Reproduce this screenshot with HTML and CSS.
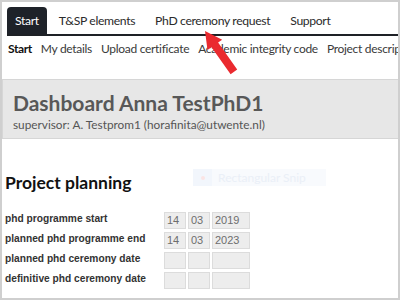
FILE: index.html
```html
<!DOCTYPE html>
<html>
<head>
<meta charset="utf-8">
<link rel="stylesheet" href="styles.css">
</head>
<body>
<div class="frame">
  <nav class="tabs">
    <span class="tab active">Start</span>
    <span class="tab first">T&amp;SP elements</span>
    <span class="tab">PhD ceremony request</span>
    <span class="tab">Support</span>
  </nav>
  <nav class="subnav">
    <span class="sub current">Start</span>
    <span class="sub">My details</span>
    <span class="sub">Upload certificate</span>
    <span class="sub">Academic integrity code</span>
    <span class="sub">Project description</span>
  </nav>
  <header class="dash">
    <h1 class="dash-title">Dashboard Anna TestPhD1</h1>
    <p class="dash-sub">supervisor: A. Testprom1 (horafinita@utwente.nl)</p>
  </header>
  <section class="planning">
    <h2 class="plan-title">Project planning</h2>
    <div class="plan-grid">
      <div class="label">phd programme start</div>
      <div class="dates"><span class="box d">14</span><span class="box d">03</span><span class="box y">2019</span></div>
      <div class="label">planned phd programme end</div>
      <div class="dates"><span class="box d">14</span><span class="box d">03</span><span class="box y">2023</span></div>
      <div class="label">planned phd ceremony date</div>
      <div class="dates"><span class="box d"></span><span class="box d"></span><span class="box y"></span></div>
      <div class="label">definitive phd ceremony date</div>
      <div class="dates"><span class="box d"></span><span class="box d"></span><span class="box y"></span></div>
    </div>
  </section>
  <div class="snip"><span class="snip-icon"><span class="snip-dot"></span></span><span class="snip-text">Rectangular Snip</span></div>
  <svg class="arrow" width="400" height="300" viewBox="0 0 400 300">
    <polygon fill="#ea2a2f" points="205,31 222.2,39.7 218.1,42.6 237.2,69.6 230.6,74.2 211.5,47.2 207.5,50.1"/>
  </svg>
</div>
</body>
</html>
```

FILE: styles.css
```css
html, body {
  margin: 0;
  padding: 0;
  background: #fff;
}
.frame {
  position: relative;
  width: 400px;
  height: 300px;
  box-sizing: border-box;
  border: 2px solid #cfcfcf;
  overflow: hidden;
  font-family: Lato, "Open Sans", sans-serif;
}
.tabs {
  display: flex;
  margin: 5px 0 0 5px;
  height: 27px;
  border-bottom: 2px solid #1e2126;
}
.tab {
  display: block;
  padding: 0 10px;
  line-height: 27px;
  font-size: 12.2px;
  letter-spacing: -0.35px;
  color: #2b2b2b;
  white-space: nowrap;
}
.tab.active {
  padding: 0 8px;
  background: #1e2229;
  color: #fff;
  border-radius: 4px 4px 0 0;
}
.tab.first {
  padding-left: 12px;
}
.subnav {
  display: flex;
  gap: 9px;
  padding: 4px 0 0 6px;
  height: 19px;
  white-space: nowrap;
  overflow: hidden;
}
.sub {
  font-size: 12px;
  letter-spacing: -0.3px;
  line-height: 18px;
  color: #3a3a3a;
}
.sub.current {
  color: #111;
  font-weight: 700;
  letter-spacing: -0.4px;
}
.dash {
  margin-top: 20px;
  height: 58px;
  background: #e7e7e7;
  border-top: 1px solid #d6d6d6;
  border-bottom: 1px solid #d6d6d6;
  border-left: 1px solid #d6d6d6;
  padding: 0 0 0 10px;
}
.dash-title {
  margin: 0;
  padding-top: 11px;
  font-size: 21px;
  line-height: 24px;
  font-weight: 700;
  color: #585858;
}
.dash-sub {
  margin: 2px 0 0;
  font-size: 11.8px;
  line-height: 15px;
  color: #555;
}
.planning {
  padding: 0 0 0 3px;
}
.plan-title {
  margin: 33px 0 0;
  font-size: 17.5px;
  line-height: 21px;
  font-weight: 700;
  color: #111;
}
.plan-grid {
  display: grid;
  grid-template-columns: 159px auto;
  row-gap: 3px;
  margin-top: 19px;
}
.label {
  font-family: "Liberation Sans", Arial, sans-serif;
  font-size: 10.2px;
  font-weight: 700;
  line-height: 13px;
  color: #333;
}
.dates {
  display: flex;
  gap: 2px;
}
.box {
  display: block;
  box-sizing: border-box;
  height: 17px;
  background: #ededed;
  border: 1px solid #dcdcdc;
  font-family: "Liberation Sans", Arial, sans-serif;
  font-size: 11px;
  line-height: 15px;
  color: #6e6e6e;
  padding-left: 2px;
}
.box.d { width: 22px; }
.box.y { width: 38px; }
.snip {
  position: absolute;
  left: 191px;
  top: 167px;
  width: 133px;
  height: 17px;
  background: #f8fafd;
  display: flex;
  align-items: center;
}
.snip-icon {
  width: 19px;
  height: 17px;
  background: #f2f6fc;
  display: flex;
  align-items: center;
  justify-content: center;
}
.snip-dot {
  width: 4px;
  height: 4px;
  border-radius: 50%;
  background: #fbe4e4;
}
.snip-text {
  margin-left: 6px;
  font-family: Lato, sans-serif;
  font-size: 12px;
  color: #eaeff7;
}
.arrow {
  position: absolute;
  left: -2px;
  top: -2px;
}
```
